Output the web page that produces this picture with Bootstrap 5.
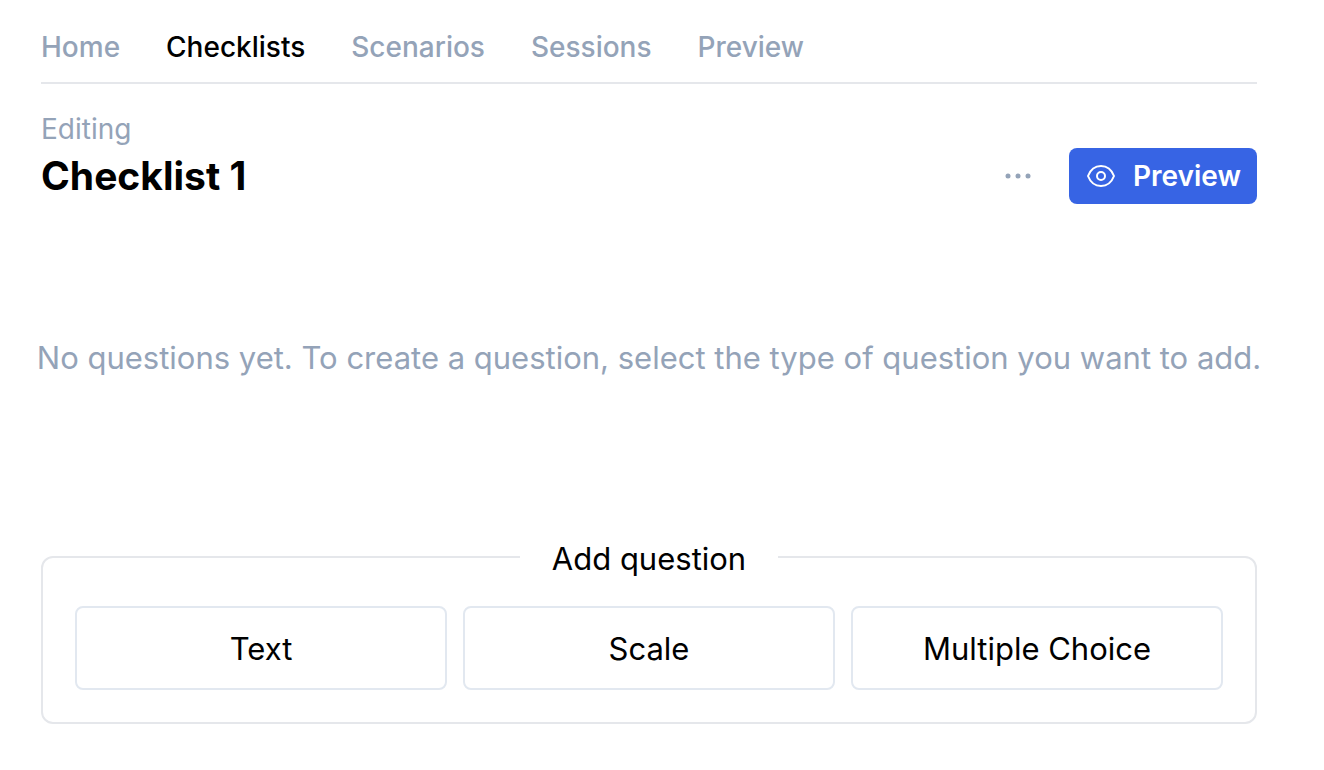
<!DOCTYPE html>
<html lang="en">
<head>
<meta charset="utf-8">
<meta name="viewport" content="width=device-width, initial-scale=1">
<title>Checklist 1</title>
<link href="https://cdn.jsdelivr.net/npm/bootstrap@5.3.0/dist/css/bootstrap.min.css" rel="stylesheet">
<style>
body { font-family: Inter, "Liberation Sans", sans-serif; color: #000; background: #fff; }
.page { padding: 0 67px 0 41px; }
.tabs { height: 84px; gap: 46px; padding-top: 12px; border-bottom: 2px solid #e5e7eb; font-size: 28px; line-height: 40px; font-weight: 500; }
.tabs .nav-link { padding: 0; color: #94a3b8; }
.tabs .nav-link.active { color: #000; }
.top-row { padding-top: 26px; }
.editing { font-size: 28px; line-height: 38px; color: #94a3b8; }
.title { font-size: 39px; line-height: 56px; font-weight: 700; }
.btn-more { padding: 0; width: 56px; height: 56px; color: #94a3b8; border: 0; }
.btn-preview { --bs-btn-color: #fff; --bs-btn-bg: #3764e4; --bs-btn-hover-color: #fff; --bs-btn-hover-bg: #2d55cc; height: 56px; padding: 0 16px; border: 0; border-radius: 8px; font-size: 28px; font-weight: 600; }
.empty { margin: 0 -8px; padding: 130px 0 153px; font-size: 31px; line-height: 48px; color: #94a3b8; }
.add { border: 2px solid #e5e7eb; border-radius: 12px; padding: 27px 32px 32px; }
.add legend { float: none; width: auto; margin: 0 auto; padding: 4px 32px 0; font-size: 31px; line-height: 40px; }
.btn-type { --bs-btn-color: #000; --bs-btn-border-color: #e2e8f0; --bs-btn-hover-bg: #f8fafc; --bs-btn-hover-border-color: #e2e8f0; border-width: 2px; border-radius: 8px; height: 84px; padding: 2px 0 0; font-size: 31px; }
</style>
</head>
<body>
<div class="page">
  <nav class="nav tabs align-items-center flex-nowrap">
    <a class="nav-link" href="#">Home</a>
    <a class="nav-link active" aria-current="page" href="#">Checklists</a>
    <a class="nav-link" href="#">Scenarios</a>
    <a class="nav-link" href="#">Sessions</a>
    <a class="nav-link" href="#">Preview</a>
  </nav>
  <main>
    <header class="top-row d-flex align-items-end justify-content-between">
      <div>
        <div class="editing">Editing</div>
        <h1 class="title mb-0">Checklist 1</h1>
      </div>
      <div class="d-flex gap-4">
        <button class="btn btn-more" type="button" aria-label="More options">
          <svg width="32" height="32" viewBox="0 0 32 32" fill="currentColor"><circle cx="7" cy="16" r="2.5"/><circle cx="17" cy="16" r="2.5"/><circle cx="27" cy="16" r="2.5"/></svg>
        </button>
        <button class="btn btn-preview d-flex align-items-center gap-3" type="button">
          <svg width="32" height="32" viewBox="0 0 32 32" fill="none" stroke="currentColor" stroke-width="2" stroke-linejoin="round"><path d="M3 16C5.500 9.500 10 6 16 6s10.500 3.500 13 10c-2.500 6.500-7 10-13 10S5.500 22.500 3 16Z"/><circle cx="16" cy="16" r="4"/></svg>
          Preview
        </button>
      </div>
    </header>
    <p class="empty text-center">No questions yet. To create a question, select the type of question you want to add.</p>
    <fieldset class="add">
      <legend>Add question</legend>
      <div class="row row-cols-3 gx-3">
        <div class="col"><button class="btn btn-type w-100" type="button">Text</button></div>
        <div class="col"><button class="btn btn-type w-100" type="button">Scale</button></div>
        <div class="col"><button class="btn btn-type w-100" type="button">Multiple Choice</button></div>
      </div>
    </fieldset>
  </main>
</div>
<script src="https://cdn.jsdelivr.net/npm/bootstrap@5.3.0/dist/js/bootstrap.bundle.min.js"></script>
</body>
</html>
